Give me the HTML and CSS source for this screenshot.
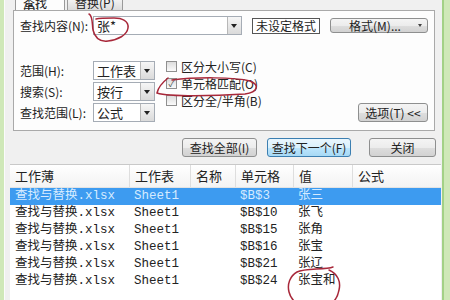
FILE: index.html
```html
<!DOCTYPE html>
<html lang="zh-CN">
<head>
    <meta charset="UTF-8">
    <title>查找和替换</title>
    <link rel="stylesheet" href="styles.css">
</head>
<body>
    <div class="frame">
        <div class="tabs">
            <div class="tab active">查找(D)</div>
            <div class="tab">替换(P)</div>
        </div>

        <div class="panel">
            <div class="find-row">
                <span class="label">查找内容(N):</span>
                <div class="combo wide"><span class="combo-text">张*</span><span class="drop"></span></div>
                <div class="preview">未设定格式</div>
                <button class="btn format">格式(M)...<span class="caret"></span></button>
            </div>

            <div class="options">
                <div class="selects">
                    <div class="sel-row">
                        <span class="label">范围(H):</span>
                        <div class="combo"><span class="combo-text">工作表</span><span class="drop"></span></div>
                    </div>
                    <div class="sel-row">
                        <span class="label">搜索(S):</span>
                        <div class="combo"><span class="combo-text">按行</span><span class="drop"></span></div>
                    </div>
                    <div class="sel-row">
                        <span class="label">查找范围(L):</span>
                        <div class="combo"><span class="combo-text">公式</span><span class="drop"></span></div>
                    </div>
                </div>
                <div class="checks">
                    <div class="check"><span class="box"></span>区分大小写(C)</div>
                    <div class="check"><span class="box checked">✓</span>单元格匹配(O)</div>
                    <div class="check"><span class="box"></span>区分全/半角(B)</div>
                </div>
                <button class="btn opts">选项(T) &lt;&lt;</button>
            </div>
        </div>

        <div class="actions">
            <button class="btn find-all">查找全部(I)</button>
            <button class="btn find-next">查找下一个(F)</button>
            <button class="btn close">关闭</button>
        </div>

        <div class="results">
            <div class="row head">
                <span>工作薄</span><span>工作表</span><span>名称</span><span>单元格</span><span>值</span><span>公式</span>
            </div>
            <div class="row selected">
                <span>查找与替换.xlsx</span><span>Sheet1</span><span></span><span>$B$3</span><span>张三</span><span></span>
            </div>
            <div class="row">
                <span>查找与替换.xlsx</span><span>Sheet1</span><span></span><span>$B$10</span><span>张飞</span><span></span>
            </div>
            <div class="row">
                <span>查找与替换.xlsx</span><span>Sheet1</span><span></span><span>$B$15</span><span>张角</span><span></span>
            </div>
            <div class="row">
                <span>查找与替换.xlsx</span><span>Sheet1</span><span></span><span>$B$16</span><span>张宝</span><span></span>
            </div>
            <div class="row">
                <span>查找与替换.xlsx</span><span>Sheet1</span><span></span><span>$B$21</span><span>张辽</span><span></span>
            </div>
            <div class="row">
                <span>查找与替换.xlsx</span><span>Sheet1</span><span></span><span>$B$24</span><span>张宝和</span><span></span>
            </div>
        </div>
    </div>

    <!-- hand-drawn red circles over the dialog -->
    <svg class="marks" width="450" height="300" viewBox="0 0 450 300">
        <path d="M89,14 C93,16 92,24 93,30 C95,38 100,42 108,41 C118,40 127,35 128,28 C129,21 122,18 114,18 C106,18 100,18 96,19"/>
        <path d="M168,78 C163,82 158,88 157,93 C170,97 215,96 245,94 C258,92 260,85 250,81 C235,77 195,77 172,80"/>
        <path d="M333,267 C325,270 305,268 297,272 C290,276 287,284 289,292 C290,296 292,299 294,301 M329,270 C338,274 341,282 339,290 C338,295 336,299 334,301"/>
    </svg>
</body>
</html>
```

FILE: styles.css
```css
body {
    margin: 0;
    background-color: #cfe8b8;
    font-family: "Noto Sans CJK SC", sans-serif;
    font-size: 12px;
    color: #222;
    overflow: hidden;
}
.frame {
    display: flex;
    flex-direction: column;
    width: 437px;
    height: 300px;
    margin-left: 4px;
    background-color: #f0f0f0;
    border-left: 1px solid #fbfbfb;
    border-right: 2px solid #a3d186;
}

/* tabs, cut off at the top */
.tabs {
    display: flex;
    height: 10px;
    padding-left: 10px;
}
.tab {
    height: 10px;
    line-height: 6px;
    padding: 0 7px;
    border: 1px solid #9a9a9a;
    border-top: none;
    border-bottom: none;
    box-sizing: border-box;
    background: linear-gradient(#f2f2f2, #dcdcdc);
    margin-right: 2px;
}
.tab.active {
    width: 50px;
    background: #fdfdfd;
}

.panel {
    margin: 0 7px 0 8px;
    padding: 5px 6px 8px 6px;
    background-color: #fdfdfd;
    border: 1px solid #a9a9a9;
}
.label {
    display: inline-block;
    width: 73px;
    line-height: 19px;
    white-space: nowrap;
}
.find-row {
    display: flex;
    align-items: center;
    height: 19px;
}
.combo {
    display: flex;
    width: 62px;
    height: 19px;
    box-sizing: border-box;
    border: 1px solid #a5acb5;
    background-color: #fff;
}
.combo.wide {
    width: 149px;
}
.combo-text {
    flex: 1;
    padding-left: 3px;
    line-height: 17px;
    font-size: 13px;
}
.drop {
    position: relative;
    width: 13px;
    background: linear-gradient(#f6f6f6, #dadada);
    border-left: 1px solid #b8b8b8;
}
.drop::after {
    content: "";
    position: absolute;
    left: 3px;
    top: 7px;
    border-left: 3.5px solid transparent;
    border-right: 3.5px solid transparent;
    border-top: 4px solid #222;
}
.preview {
    width: 68px;
    height: 16px;
    margin-left: 10px;
    box-sizing: border-box;
    border: 1px solid #555;
    background-color: #fff;
    line-height: 14px;
    text-align: center;
}

.btn {
    height: 19px;
    padding: 0;
    font-family: "Noto Sans CJK SC", sans-serif;
    font-size: 12px;
    line-height: 17px;
    color: #222;
    border: 1px solid #8e8f8f;
    border-radius: 3px;
    background: linear-gradient(#f4f4f4, #ececec 50%, #dedede 50%, #d2d2d2);
}
.btn.format {
    position: relative;
    width: 98px;
    height: 15px;
    line-height: 13px;
    margin-left: 10px;
    padding-right: 8px;
}
.caret {
    position: absolute;
    right: 5px;
    top: 5px;
    border-left: 2px solid transparent;
    border-right: 2px solid transparent;
    border-top: 3px solid #444;
}

.options {
    display: flex;
    margin-top: 23px;
}
.selects {
    display: flex;
    flex-direction: column;
    gap: 2px;
    padding-top: 3px;
}
.sel-row {
    display: flex;
}
.checks {
    flex: 1;
    margin-left: 11px;
}
.check {
    display: flex;
    align-items: center;
    height: 17px;
    white-space: nowrap;
}
.box {
    width: 9px;
    height: 9px;
    margin-right: 4px;
    border: 1px solid #8f8f8f;
    background: linear-gradient(#dcdcdc, #fafafa);
    font-size: 9px;
    line-height: 9px;
    text-align: center;
    color: #555;
}
.btn.opts {
    align-self: flex-end;
    width: 70px;
}

.actions {
    display: flex;
    justify-content: flex-end;
    margin: 7px 6px 0 0;
}
.find-all {
    width: 75px;
}
.btn.find-next {
    width: 84px;
    margin-left: 10px;
    border-color: #3c7fb1;
    background: linear-gradient(#eaf6fd, #d9f0fc 50%, #bee6fd 50%, #a7d9f5);
}
.close {
    width: 67px;
    margin-left: 18px;
}

.results {
    flex: 1;
    margin: 7px 1px 0 5px;
    background-color: #fff;
    border-top: 1px solid #c9c9c9;
    font-family: "Liberation Mono", "Noto Sans CJK SC", monospace;
    font-size: 12.5px;
}
.row {
    display: grid;
    grid-template-columns: 119px 61px 45px 58px 59px 1fr;
    height: 17px;
    line-height: 17px;
    white-space: nowrap;
}
.row span {
    padding-left: 5px;
    overflow: hidden;
}
.row.head {
    height: 23px;
    line-height: 22px;
    font-family: "Noto Sans CJK SC", sans-serif;
    font-size: 13px;
    background: linear-gradient(#ffffff, #f3f3f3);
    border-bottom: 1px solid #e3e3e3;
    box-sizing: border-box;
}
.row.head span + span {
    border-left: 1px solid #dedede;
}
.row.selected {
    background-color: #3d9bf0;
    color: #d6ebff;
}

.marks {
    position: absolute;
    left: 0;
    top: 0;
    pointer-events: none;
}
.marks path {
    fill: none;
    stroke: #a8283a;
    stroke-width: 1.5;
    stroke-linecap: round;
}
```
